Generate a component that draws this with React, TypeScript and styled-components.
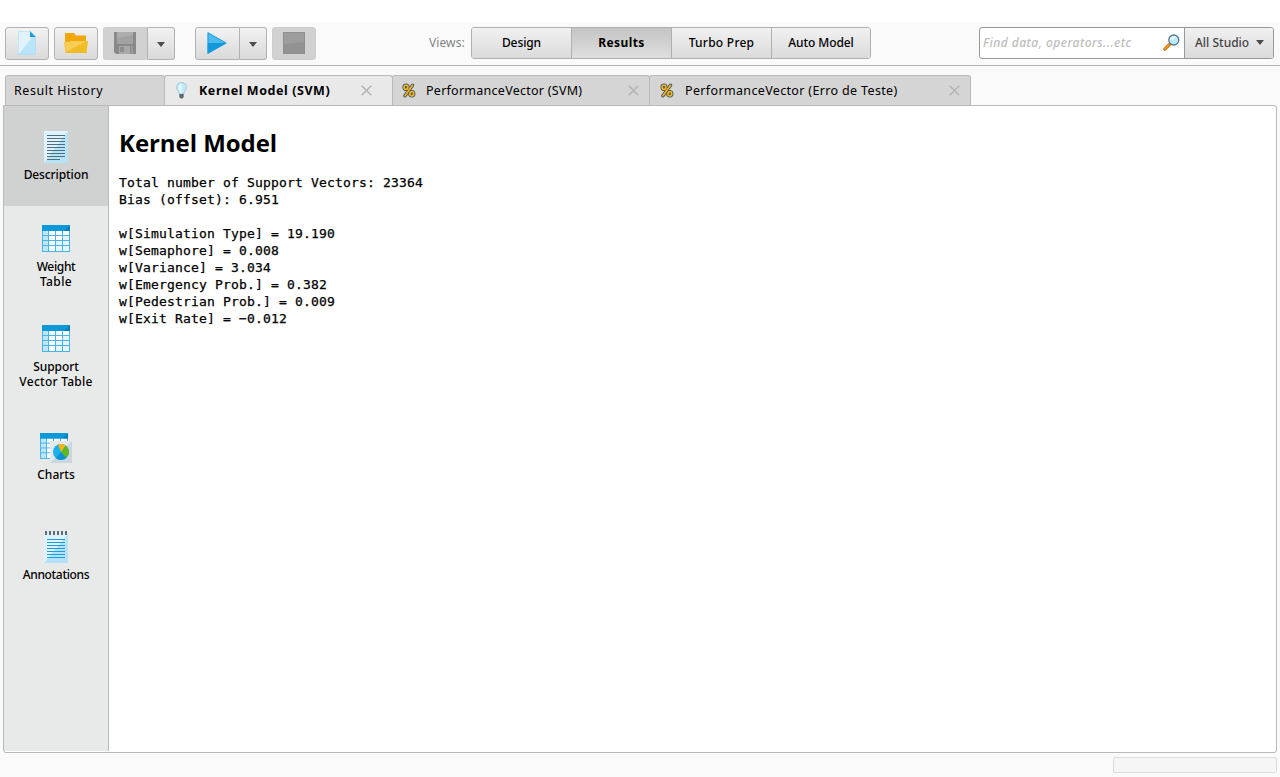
import React from 'react';
import styled, { createGlobalStyle, css } from 'styled-components';

const GlobalStyle = createGlobalStyle`
  * { box-sizing: border-box; }
  html, body { margin: 0; padding: 0; background: #fff; }
  body { font-family: "Noto Sans", "Open Sans", sans-serif; font-size: 12px; color: #000; overflow: hidden; }
  svg { display: block; flex: none; }
`;

const Window = styled.div`
  width: 1280px;
  height: 777px;
  padding-top: 22px;
  display: flex;
  flex-direction: column;
`;

const Toolbar = styled.header`
  height: 44px;
  flex: none;
  display: flex;
  align-items: flex-start;
  padding: 5px 6px 0 5px;
  background: #fafafa;
  border-bottom: 1px solid #b4b4b4;
`;

const Group = styled.div<{ $gap?: number }>`
  display: flex;
  margin-right: ${(p) => p.$gap ?? 5}px;
`;

const ToolButton = styled.button<{ $w?: number; $disabled?: boolean; $pos?: 'left' | 'right' }>`
  width: ${(p) => p.$w ?? 44}px;
  height: 33px;
  padding: 0 0 1px;
  display: flex;
  align-items: center;
  justify-content: center;
  border: 1px solid ${(p) => (p.$disabled ? '#cdcdcd' : '#b2b2b2')};
  border-radius: 3px;
  background: ${(p) => (p.$disabled ? '#d1d1d1' : 'linear-gradient(#f2f2f2, #dadada)')};
  ${(p) => p.$pos === 'left' && css`padding-right: 1px; border-top-right-radius: 0; border-bottom-right-radius: 0; border-right-color: #b2b2b2;`}
  ${(p) => p.$pos === 'right' && css`padding: 1px 0 0; border-top-left-radius: 0; border-bottom-left-radius: 0; border-left: 0;`}
`;

const ViewsLabel = styled.span`
  width: 42px;
  margin-left: 108px;
  line-height: 31px;
  font-size: 12px;
  letter-spacing: 0.1px;
  color: #858585;
`;

const Views = styled.nav`
  display: grid;
  grid-template-columns: 99px 100px 100px 99px;
  height: 32px;
  width: 400px;
  border: 1px solid #b0b0b0;
  border-radius: 3px;
  overflow: hidden;
`;

const ViewButton = styled.button<{ $active?: boolean }>`
  padding: 0 0 2px;
  border: 0;
  font: ${(p) => (p.$active ? 700 : 500)} 12px "Noto Sans", sans-serif;
  color: #000;
  background: ${(p) => (p.$active ? 'linear-gradient(#c4c4c4, #dfdfdf)' : 'linear-gradient(#f1f1f1, #dbdbdb)')};
  & + & { border-left: 1px solid #b0b0b0; }
`;

const Search = styled.div`
  margin-left: auto;
  display: flex;
  width: 295px;
  height: 32px;
  border: 1px solid #999;
  border-radius: 3px;
  overflow: hidden;
  background: #fff;
`;

const SearchField = styled.div`
  width: 204px;
  display: flex;
  align-items: center;
  justify-content: space-between;
  padding: 0 4px 1px 3px;
  font-size: 12px;
  font-style: italic;
  font-weight: 500;
  color: #bdbdbd;
  white-space: nowrap;
`;

const Scope = styled.div`
  flex: 1;
  display: flex;
  align-items: center;
  justify-content: space-between;
  padding: 0 9px 1px 10px;
  border-left: 1px solid #999;
  background: linear-gradient(#f1f1f1, #dadada);
  color: #444;
  font-weight: 500;
`;

const Body = styled.main`
  flex: 1;
  display: flex;
  flex-direction: column;
  padding: 9px 3px 0;
  background: #fafafa;
`;

const Tabs = styled.div`
  display: flex;
  height: 30px;
  padding-left: 2px;
`;

const Tab = styled.div<{ $w: number; $active?: boolean; $pad: number }>`
  width: ${(p) => p.$w}px;
  display: flex;
  align-items: center;
  padding: 0 ${(p) => (p.$active ? 20 : 10)}px 0 ${(p) => p.$pad}px;
  border: 1px solid #bababa;
  border-bottom: 0;
  border-radius: 3px 3px 0 0;
  margin-right: -1px;
  background: ${(p) => (p.$active ? '#e9e9e9' : '#d5d5d5')};
  font-size: 12.5px;
  font-weight: ${(p) => (p.$active ? 700 : 400)};
  white-space: nowrap;
`;

const TabIcon = styled.span<{ $gap: number }>`
  margin-right: ${(p) => p.$gap}px;
`;

const CloseSlot = styled.span`
  margin-left: auto;
`;

const Text = styled.span<{ $ls?: number }>`
  letter-spacing: ${(p) => p.$ls ?? 0}px;
`;

const Panel = styled.section`
  width: 1274px;
  height: 648px;
  display: flex;
  border: 1px solid #b9b9b9;
  border-radius: 0 3px 3px 3px;
  background: #fff;
`;

const Sidebar = styled.aside`
  width: 105px;
  height: 645px;
  border-right: 1px solid #b9b9b9;
  background: #e8eae9;
`;

const SideItem = styled.div<{ $active?: boolean; $top: number }>`
  height: 100px;
  padding-top: ${(p) => p.$top}px;
  display: flex;
  flex-direction: column;
  align-items: center;
  background: ${(p) => (p.$active ? '#d0d2d1' : 'transparent')};
`;

const SideLabel = styled.div<{ $gap: number }>`
  margin-top: ${(p) => p.$gap}px;
  font-size: 12px;
  font-weight: 500;
  line-height: 15px;
  text-align: center;
  white-space: nowrap;
`;

const Content = styled.article`
  padding: 19px 10px;
`;

const Heading = styled.h1`
  margin: 0;
  font: 700 24px/36px "Open Sans", sans-serif;
  letter-spacing: -0.05px;
`;

const Report = styled.pre`
  margin: 13px 0 0;
  font: 13px/17px "DejaVu Sans Mono", monospace;
  letter-spacing: 0.174px;
  -webkit-text-stroke: 0.25px #000;
`;

const StatusBar = styled.footer`
  display: flex;
  justify-content: flex-end;
  padding-top: 4px;
`;

const Progress = styled.div`
  width: 164px;
  height: 16px;
  border: 1px solid #dcdcdc;
  border-radius: 2px;
  background: #f6f6f6;
`;

const Caret = () => (
  <svg width="8" height="5" viewBox="0 0 8 5"><path d="M0 0H8L4 5Z" fill="#4c4c4c" /></svg>
);

const NewIcon = () => (
  <svg width="18" height="24" viewBox="0 0 18 24">
    <path d="M0 0H12L18 6V24H0Z" fill="#b9e4f9" />
    <path d="M0 0H12L15 5L0 24Z" fill="#e1f4fd" />
    <path d="M12 0L18 6H12Z" fill="#0f9ddd" />
    <path d="M.3.3H12L17.7 6V23.7H.3Z" fill="none" stroke="#a5d8f0" strokeWidth=".6" />
  </svg>
);

const OpenIcon = () => (
  <svg width="24" height="20" viewBox="0 0 24 20">
    <path d="M1 0H10L12 2.500H22V10H1Z" fill="#f2a80c" />
    <path d="M0 9H5L8 8H24L22.500 20H1.500Z" fill="#f1bd27" />
    <path d="M0 9H5L8 8H23L2 19Z" fill="#f7cd55" />
  </svg>
);

const SaveIcon = () => (
  <svg width="22" height="22" viewBox="0 0 22 22">
    <path d="M0 0H22V22H2L0 20Z" fill="#898989" />
    <path d="M3 0H19V12H3Z" fill="#adadad" />
    <path d="M3 6L19 3V12H3Z" fill="#a2a2a2" />
    <path d="M5 14H16V22H5Z" fill="#a9a9a9" />
    <path d="M6 15H10V20H6Z" fill="#8d8d8d" />
    <path d="M17 14H19V22H17Z" fill="#9a9a9a" />
  </svg>
);

const PlayIcon = () => (
  <svg width="20" height="22" viewBox="0 0 20 22">
    <path d="M.5 0L20 11H.5Z" fill="#4bbaee" />
    <path d="M.5 11H20L.5 22Z" fill="#1199dc" />
    <path d="M1 .8L19 11L1 21.200Z" fill="none" stroke="#1698d8" strokeWidth=".7" />
  </svg>
);

const StopIcon = () => (
  <svg width="22" height="22" viewBox="0 0 22 22">
    <path d="M0 0H22V22H0Z" fill="#929292" />
    <path d="M0 0H22V10L0 12Z" fill="#9d9d9d" />
    <path d="M.5.5H21.500V21.500H.5Z" fill="none" stroke="#8f8f8f" />
  </svg>
);

const BulbIcon = () => (
  <svg width="11" height="17" viewBox="0 0 11 17">
    <path d="M5.500.5C2.500.5.6 2.500.6 5.200C.6 8.200 3 9 3.200 12H7.800C8 9 10.400 8.200 10.400 5.200C10.400 2.500 8.500.5 5.500.5Z" fill="#c5e9fa" stroke="#94c2d8" strokeWidth=".8" />
    <path d="M3 3.500Q4 2 5.500 2V11H4Q4 8.500 2.500 7Z" fill="#e8f8ff" />
    <path d="M3.300 12H7.700V15L6.500 16.500H4.500L3.300 15Z" fill="#596a73" />
  </svg>
);

const PercentIcon = () => (
  <svg width="14" height="15" viewBox="0 0 14 15" fill="none">
    <g stroke="#3f5363" strokeWidth="3.400">
      <ellipse cx="4" cy="4.300" rx="1.900" ry="2.100" /><ellipse cx="9.800" cy="10.700" rx="1.900" ry="2.100" /><path d="M10.500 2.200L3 12.800" strokeLinecap="round" />
    </g>
    <g stroke="#f5b21c" strokeWidth="1.700">
      <ellipse cx="4" cy="4.300" rx="1.900" ry="2.100" /><ellipse cx="9.800" cy="10.700" rx="1.900" ry="2.100" /><path d="M10.500 2.200L3 12.800" strokeLinecap="round" />
    </g>
  </svg>
);

const CloseIcon = () => (
  <svg width="11" height="11" viewBox="0 0 11 11"><path d="M.7.7L10.300 10.300M10.300.7L.7 10.300" stroke="#b5b5b5" strokeWidth="1.600" /></svg>
);

const SearchIcon = () => (
  <svg width="17" height="17" viewBox="0 0 17 17">
    <path d="M1.800 15.200L6.500 10.500" stroke="#c96f12" strokeWidth="3.200" strokeLinecap="round" />
    <path d="M1.800 14.800L6 10.800" stroke="#f39a1d" strokeWidth="1.600" strokeLinecap="round" />
    <circle cx="10.800" cy="6" r="5" fill="#c2eaff" stroke="#54788d" strokeWidth="1.300" />
    <path d="M7 6.500A4 4 0 0 1 11 2.200L13.500 3Z" fill="#e9f8ff" />
  </svg>
);

const lines = (color: string, ys: number[], lastShort: boolean) =>
  ys.map((y, i) => (
    <rect key={y} x="3" y={y} width={lastShort && i === ys.length - 1 ? 13 : 18} height="1" fill={color} />
  ));

const DocIcon = () => (
  <svg width="24" height="32" viewBox="0 0 24 32">
    <path d="M0 0H24V32H0Z" fill="#b8e2f6" />
    <path d="M0 0H24L0 32Z" fill="#e0f3fc" />
    {lines('#4e6f80', [4, 7, 10, 13, 16, 19, 22, 25, 28], true)}
  </svg>
);

const NotesIcon = () => (
  <svg width="24" height="32" viewBox="0 0 24 32">
    <path d="M0 3H24V32H0Z" fill="#b5e2f8" />
    <path d="M0 3H24L0 32Z" fill="#e0f3fc" />
    {[1, 5, 9, 13, 17, 21].map((x) => <rect key={x} x={x} y="0" width="2" height="4" fill="#5c6f79" />)}
    {lines('#1b9cdb', [8, 11, 14, 17, 20, 23, 26], false)}
  </svg>
);

const TableShape = () => (
  <>
    <path d="M0 0H28V27H0Z" fill="#46b6ea" />
    <path d="M0 0H28V6H0Z" fill="#0d98da" />
    <path d="M28 0V6H22Z" fill="#087fbd" />
    {[6, 11, 16, 21].map((y) =>
      [1, 7, 14, 21].map((x) => (
        <rect key={`${x}-${y}`} x={x} y={y} width={x === 1 ? 5 : 6} height={y === 21 ? 5 : 4} fill={x === 1 ? '#bfe6f8' : x + y < 29 ? '#ffffff' : '#e5f5fc'} />
      )),
    )}
  </>
);

const TableIcon = () => <svg width="28" height="27" viewBox="0 0 28 27"><TableShape /></svg>;

const ChartsIcon = () => (
  <svg width="32" height="30" viewBox="0 0 32 30">
    <g transform="scale(1 .963)"><TableShape /></g>
    <path d="M10 8H32V30H10Z" fill="#cbd6dd" />
    <path d="M10 8H32L10 30Z" fill="#e4e9ec" />
    <circle cx="21" cy="19" r="8" fill="#1bb0ee" />
    <path d="M21 19L26.500 24.800A8 8 0 0 1 16 25.200Z" fill="#0c92d4" />
    <path d="M21 19L25.500 12.400A8 8 0 0 1 26.500 24.800Z" fill="#60b722" />
    <path d="M21 19L18 11.600A8 8 0 0 1 25.500 12.400Z" fill="#fbb60d" />
  </svg>
);

const REPORT = `Total number of Support Vectors: 23364
Bias (offset): 6.951

w[Simulation Type] = 19.190
w[Semaphore] = 0.008
w[Variance] = 3.034
w[Emergency Prob.] = 0.382
w[Pedestrian Prob.] = 0.009
w[Exit Rate] = −0.012`;

export default function App() {
  return (
    <Window>
      <GlobalStyle />
      <Toolbar>
        <Group><ToolButton><NewIcon /></ToolButton></Group>
        <Group><ToolButton><OpenIcon /></ToolButton></Group>
        <Group $gap={20}>
          <ToolButton $w={45} $disabled $pos="left"><SaveIcon /></ToolButton>
          <ToolButton $w={27} $pos="right"><Caret /></ToolButton>
        </Group>
        <Group>
          <ToolButton $w={45} $pos="left"><PlayIcon /></ToolButton>
          <ToolButton $w={27} $pos="right"><Caret /></ToolButton>
        </Group>
        <Group><ToolButton $disabled><StopIcon /></ToolButton></Group>
        <ViewsLabel>Views:</ViewsLabel>
        <Views>
          <ViewButton><Text $ls={-0.1}>Design</Text></ViewButton>
          <ViewButton $active><Text $ls={0.4}>Results</Text></ViewButton>
          <ViewButton><Text $ls={0.25}>Turbo Prep</Text></ViewButton>
          <ViewButton><Text $ls={-0.1}>Auto Model</Text></ViewButton>
        </Views>
        <Search>
          <SearchField><Text $ls={0.48}>Find data, operators...etc</Text><SearchIcon /></SearchField>
          <Scope><Text>All Studio</Text><Caret /></Scope>
        </Search>
      </Toolbar>
      <Body>
        <Tabs>
          <Tab $w={160} $pad={8}><Text $ls={0.53}>Result History</Text></Tab>
          <Tab $w={229} $pad={11} $active>
            <TabIcon $gap={12}><BulbIcon /></TabIcon><Text $ls={0.56}>Kernel Model (SVM)</Text><CloseSlot><CloseIcon /></CloseSlot>
          </Tab>
          <Tab $w={258} $pad={9}>
            <TabIcon $gap={10}><PercentIcon /></TabIcon><Text $ls={0.26}>PerformanceVector (SVM)</Text><CloseSlot><CloseIcon /></CloseSlot>
          </Tab>
          <Tab $w={322} $pad={10}>
            <TabIcon $gap={11}><PercentIcon /></TabIcon><Text $ls={0.35}>PerformanceVector (Erro de Teste)</Text><CloseSlot><CloseIcon /></CloseSlot>
          </Tab>
        </Tabs>
        <Panel>
          <Sidebar>
            <SideItem $active $top={25}><DocIcon /><SideLabel $gap={4}><Text $ls={-0.1}>Description</Text></SideLabel></SideItem>
            <SideItem $top={19}><TableIcon /><SideLabel $gap={7}><Text $ls={-0.35}>Weight</Text><br /><Text $ls={0.4}>Table</Text></SideLabel></SideItem>
            <SideItem $top={19}><TableIcon /><SideLabel $gap={7}><Text $ls={-0.1}>Support</Text><br /><Text $ls={0.25}>Vector Table</Text></SideLabel></SideItem>
            <SideItem $top={27}><ChartsIcon /><SideLabel $gap={4}>Charts</SideLabel></SideItem>
            <SideItem $top={25}><NotesIcon /><SideLabel $gap={4}><Text $ls={-0.33}>Annotations</Text></SideLabel></SideItem>
          </Sidebar>
          <Content>
            <Heading>Kernel Model</Heading>
            <Report>{REPORT}</Report>
          </Content>
        </Panel>
        <StatusBar><Progress /></StatusBar>
      </Body>
    </Window>
  );
}
